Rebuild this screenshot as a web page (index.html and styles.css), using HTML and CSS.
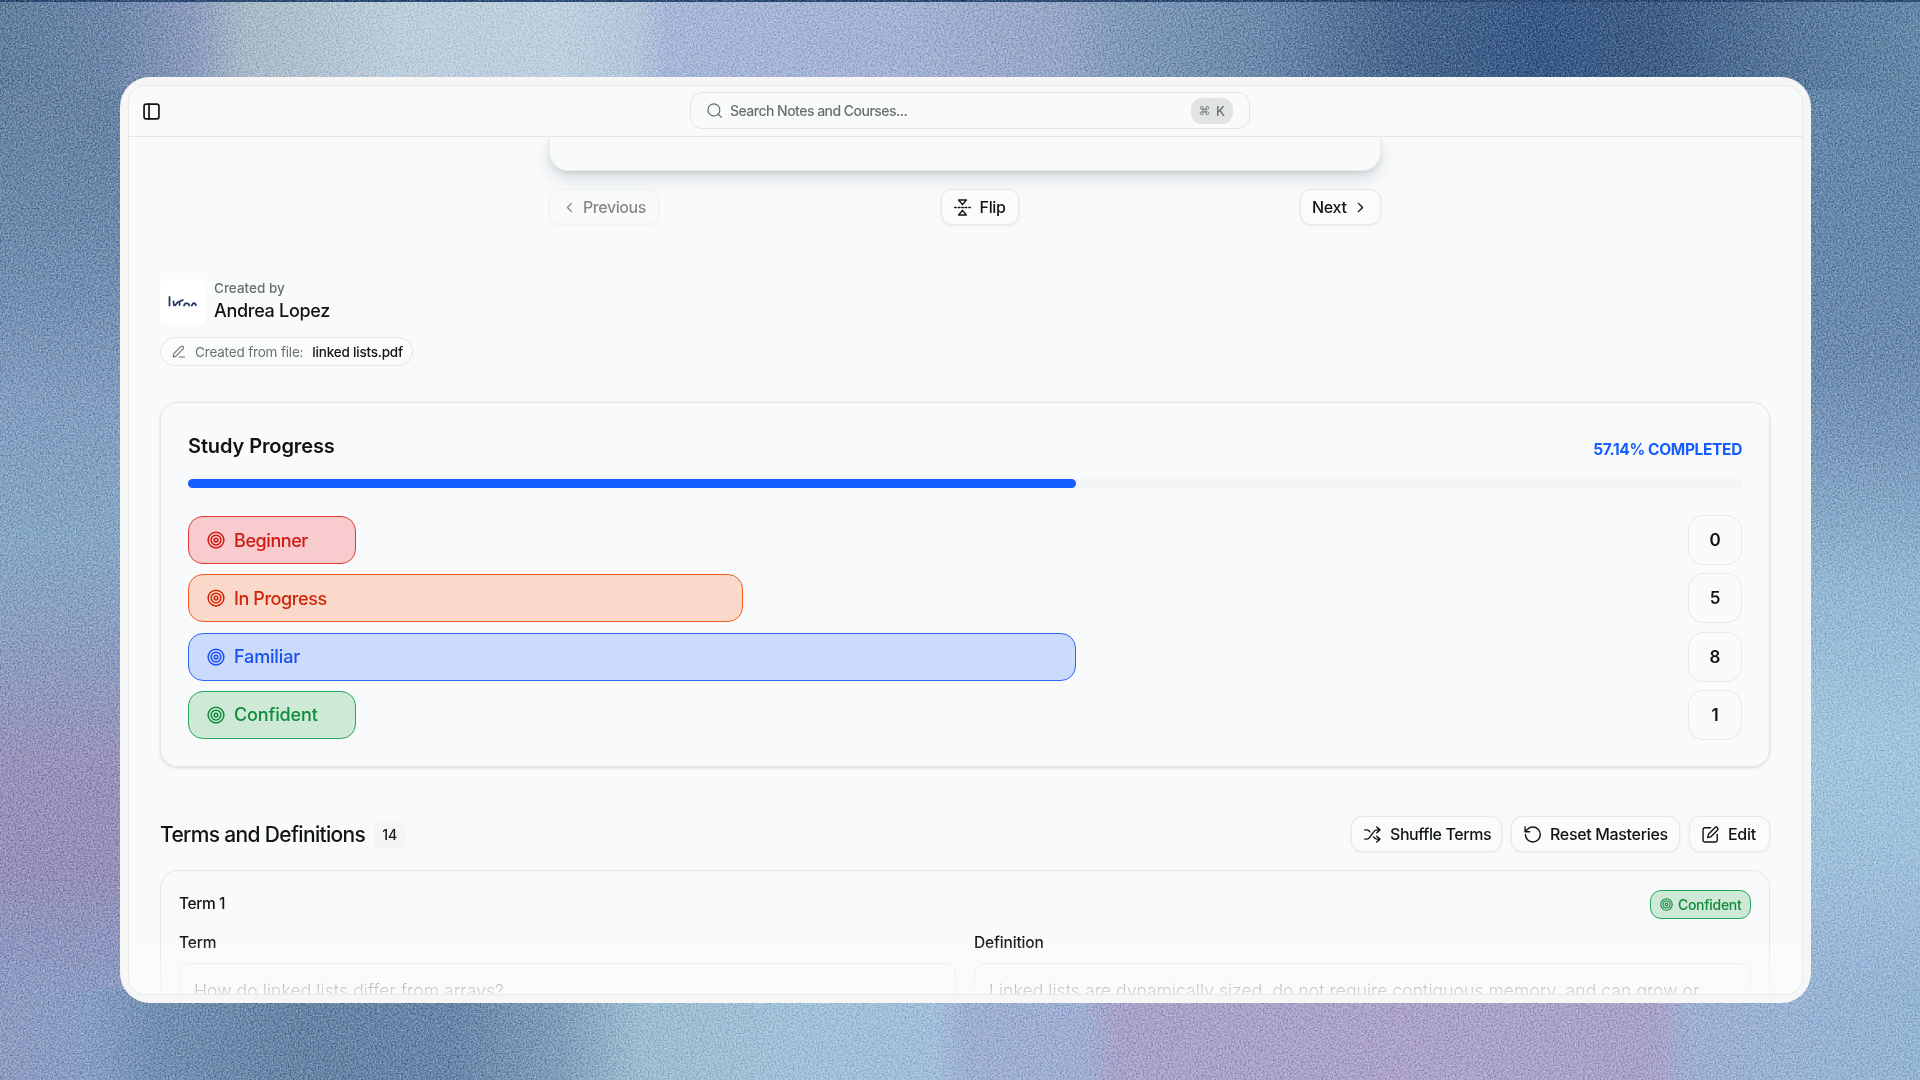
FILE: index.html
```html
<!DOCTYPE html>
<html lang="en">
<head>
	<meta charset="UTF-8">
	<title>Study Progress</title>
	<link rel="stylesheet" href="styles.css">
</head>
<body>
	<svg class="defs" width="0" height="0">
		<symbol id="target" viewBox="0 0 24 24"><circle cx="12" cy="12" r="10.5"/><circle cx="12" cy="12" r="6.5"/><circle cx="12" cy="12" r="2.5"/></symbol>
	</svg>
	<svg class="grain" width="1920" height="1080">
		<filter id="noise" x="0" y="0" width="100%" height="100%" color-interpolation-filters="sRGB">
			<feTurbulence type="fractalNoise" baseFrequency="0.6" numOctaves="2" seed="4"/>
			<feColorMatrix type="matrix" values="1.8 0 0 0 -0.4  1.8 0 0 0 -0.4  1.8 0 0 0 -0.4  0 0 0 0 1"/>
		</filter>
		<rect width="1920" height="1080" filter="url(#noise)"/>
	</svg>
	<div class="window">
		<div class="panel">
			<header>
				<svg class="icon side" viewBox="0 0 24 24"><rect x="1.5" y="1.5" width="21" height="21" rx="3"/><path d="M8.5 1.5v21"/></svg>
				<div class="search">
					<svg class="icon" viewBox="0 0 24 24"><circle cx="11" cy="11" r="9.5"/><path d="M18 18l5 5"/></svg>
					<span class="t-search">Search Notes and Courses...</span>
					<kbd><svg class="cmd" viewBox="0 0 24 24"><path d="M15 6v12a3 3 0 1 0 3-3H6a3 3 0 1 0 3 3V6a3 3 0 1 0-3 3h12a3 3 0 1 0-3-3"/></svg>K</kbd>
				</div>
			</header>
			<main>
				<div class="flash">
					<div class="flashcard"></div>
					<div class="flash-btns">
						<button class="btn prev"><svg class="icon chev" viewBox="0 0 10 16"><path d="M8 2L2 8l6 6"/></svg><span class="t-prev">Previous</span></button>
						<button class="btn flip"><svg class="icon" viewBox="0 0 24 24"><path d="M6.500 1.500h11l-5.500 6.500zM6.500 22.500h11l-5.500-6.500zM1 12h2M6 12h2.500M11 12h2M15.500 12h2.500M21 12h2"/></svg><span class="t-flip">Flip</span></button>
						<button class="btn next"><span class="t-next">Next</span><svg class="icon chev" viewBox="0 0 10 16"><path d="M2 2l6 6-6 6"/></svg></button>
					</div>
				</div>
				<div class="author">
					<div class="avatar">
						<svg viewBox="0 0 45 45"><path d="M9.500 18v8.500M13.500 22.500l.3 3.500 1.500.3 2.500-3.300M19.500 26v-3.500l3.300-1.500M24 26.500l1.200-2 1.800-.2M28.500 24.800l.8 1.700M31.800 26.500l1.200-2 1.800-.3 1.200 2.100"/></svg>
					</div>
					<div class="names">
						<span class="t-by">Created by</span>
						<span class="t-name">Andrea Lopez</span>
					</div>
				</div>
				<div class="file">
					<svg class="icon" viewBox="0 0 24 24"><path d="M13 22h10M2 22l1.500-6L16.500 2.500a3 3 0 0 1 4.200 4.200L7.500 20.500z"/></svg>
					<span class="t-from">Created from file:</span>
					<span class="t-file">linked lists.pdf</span>
				</div>
				<div class="progress">
					<div class="progress-head">
						<h2 class="t-study">Study Progress</h2>
						<span class="t-done">57.14% COMPLETED</span>
					</div>
					<div class="track"><div class="fill" style="width:57.14%"></div></div>
					<div class="row"><div class="bar beginner" style="width:168px"><svg class="icon"><use href="#target"/></svg><span class="t-beg">Beginner</span></div><div class="count">0</div></div>
					<div class="row"><div class="bar doing" style="width:35.71%"><svg class="icon"><use href="#target"/></svg><span class="t-doing">In Progress</span></div><div class="count">5</div></div>
					<div class="row"><div class="bar familiar" style="width:57.14%"><svg class="icon"><use href="#target"/></svg><span class="t-fam">Familiar</span></div><div class="count">8</div></div>
					<div class="row"><div class="bar confident" style="width:168px"><svg class="icon"><use href="#target"/></svg><span class="t-conf">Confident</span></div><div class="count">1</div></div>
				</div>
				<div class="terms-head">
					<h2 class="t-terms">Terms and Definitions</h2>
					<span class="total">14</span>
					<div class="tools">
						<button class="btn shuffle"><svg class="icon" viewBox="0 0 24 24"><path d="M1 18.500h3c2 0 3-1 4-2.500l6-8c1-1.500 2-2.500 4-2.500h4M18 1.500l4.500 4L18 9.500M1 5.500h3c2 0 3.200 1 4.300 2.800M13.500 15.500c1.200 2 2.500 3 4.500 3h4M18 14.500l4.500 4-4.500 4"/></svg><span class="t-shuf">Shuffle Terms</span></button>
						<button class="btn reset"><svg class="icon" viewBox="0 0 24 24"><path d="M2 12a10.500 10.500 0 1 0 10.500-10.500A11 11 0 0 0 5 4.500L1.500 8M1.500 1.500V8H8"/></svg><span class="t-reset">Reset Masteries</span></button>
						<button class="btn edit"><svg class="icon" viewBox="0 0 24 24"><path d="M12 2.500H4a2.500 2.500 0 0 0-2.500 2.500v15A2.500 2.500 0 0 0 4 22.500h15a2.500 2.500 0 0 0 2.500-2.500v-8M18.500 2a2.600 2.600 0 0 1 3.600 3.600L12.500 15.300 8 16.500l1.200-4.700z"/></svg><span class="t-edit">Edit</span></button>
					</div>
				</div>
				<div class="term">
					<div class="term-top">
						<span class="t-term1">Term 1</span>
						<span class="badge"><svg class="icon"><use href="#target"/></svg><span class="t-badge">Confident</span></span>
					</div>
					<div class="fields">
						<div class="field">
							<label class="t-term">Term</label>
							<div class="input"><span class="t-how">How do linked lists differ from arrays?</span></div>
						</div>
						<div class="field">
							<label class="t-def">Definition</label>
							<div class="input"><span class="t-linked">Linked lists are dynamically sized, do not require contiguous memory, and can grow or</span></div>
						</div>
					</div>
				</div>
			</main>
			<div class="fade"></div>
		</div>
	</div>
</body>
</html>
```
FILE: styles.css
```css
*{
	margin: 0;
	padding: 0;
	box-sizing: border-box;
}
html,body{
	width: 1920px;
	height: 1080px;
	overflow: hidden;
}
body{
	font-family: Inter, "Liberation Sans", sans-serif;
	font-weight: 500;
	color: #111413;
	padding: 77px 109px 77px 120px;
	/* top edge line, top band, bottom band, left side, right side */
	background:
		linear-gradient(#2f4c75, #2f4c75) 0 0 / 1920px 2px no-repeat,
		linear-gradient(90deg, #62809f 0, #6d88aa 110px, #8b9bbf 190px, #a9bac8 245px, #bdcedc 400px, #bfd0df 560px, #b5c7da 635px, #a9b8d9 665px, #a5b3d4 900px, #98a7c8 1060px, #819cbb 1120px, #6d8bac 1260px, #47678e 1400px, #385987 1540px, #3f5f88 1660px, #58799c 1790px, #668aa9 1920px) 0 0 / 1920px 90px no-repeat,
		linear-gradient(90deg, #909dc2 0, #889fc4 90px, #7592b4 150px, #6785a6 300px, #6b87aa 450px, #819fbb 560px, #9dbed1 640px, #a2c2d8 800px, #a2bfda 935px, #9fb0d2 965px, #a0b0d4 1080px, #aaa3c9 1120px, #ada4ca 1400px, #aaa3c8 1650px, #9fb0d2 1690px, #9ab4d4 1790px, #95b7d3 1920px) 0 100% / 1920px 90px no-repeat,
		linear-gradient(#647f9f 0, #6c89aa 200px, #7591b3 300px, #839ec0 400px, #87a8c6 540px, #8e9dc1 660px, #9994bc 760px, #9691ba 880px, #9097bf 930px, #8e9dc3 990px) 0 0 / 150px 990px no-repeat,
		linear-gradient(#6388a7 0, #6789ac 200px, #6c8daf 350px, #7c9cbd 450px, #94b8d4 580px, #a3c6dd 740px, #a0c2db 850px, #99b5d5 990px) 100% 0 / 150px 990px no-repeat,
		#8fa9c9;
}
.defs{
	position: absolute;
}
/* film grain over the backdrop */
.grain{
	position: absolute;
	top: 0;
	left: 0;
	mix-blend-mode: soft-light;
	opacity: 0.6;
}
.window{
	position: relative;
	height: 926px;
	padding: 8px;
	border-radius: 30px;
	background: #f6f6f6;
}
.panel{
	position: relative;
	height: 910px;
	border: 1.5px solid #e7e9e9;
	border-radius: 18px;
	background: #f8fafc;
	overflow: hidden;
	display: flex;
	flex-direction: column;
}
.icon{
	width: 18px;
	height: 18px;
	flex: none;
	fill: none;
	stroke: currentColor;
	stroke-width: 2;
	stroke-linecap: round;
	stroke-linejoin: round;
	overflow: visible;
}
span,h2,label{
	white-space: nowrap;
}
header{
	height: 51px;
	flex: none;
	border-bottom: 1px solid #e3e6e6;
	display: flex;
	align-items: center;
	padding-left: 14px;
}
.side{
	width: 17px;
	height: 17px;
	margin-top: 1px;
	stroke-width: 2.4;
}
.search{
	width: 560px;
	height: 37px;
	margin: 0 0 1px 530px;
	border: 1px solid #e3e6e5;
	border-radius: 12px;
	display: flex;
	align-items: center;
	padding: 0 16px;
	color: #69706d;
}
.search .icon{
	width: 15px;
	height: 15px;
	margin-right: 8px;
}
kbd{
	width: 42px;
	height: 26px;
	margin-left: auto;
	border-radius: 11px;
	background: #e1e4e2;
	display: flex;
	align-items: center;
	justify-content: center;
	gap: 6px;
	font: 500 13px Inter, sans-serif;
}
.cmd{
	width: 11px;
	height: 11px;
	fill: none;
	stroke: currentColor;
	stroke-width: 1.8;
}
main{
	flex: 1;
	padding: 0 32px 0 31px;
	overflow: hidden;
}
.flash{
	width: 832px;
	margin-left: 389px;
}
.flashcard{
	height: 34px;
	border: 1px solid #e6e9e9;
	border-top: 0;
	border-radius: 0 0 19px 19px;
	box-shadow: 0 8px 18px -1px rgba(30,40,35,0.13), 0 3px 7px -2px rgba(30,40,35,0.15);
}
.flash-btns{
	margin-top: 18px;
	display: flex;
	justify-content: space-between;
}
.btn{
	height: 36px;
	border: 1px solid #e5e8e7;
	border-radius: 11px;
	background: #fafbfc;
	box-shadow: 0 1px 3px rgba(0,0,0,0.06);
	font: 500 16px Inter, sans-serif;
	color: #111413;
	display: flex;
	align-items: center;
	padding-left: 12px;
}
.btn .icon{
	width: 17px;
	height: 17px;
	margin-right: 9px;
}
.btn .chev{
	width: 7px;
	height: 11px;
}
.prev{
	width: 110px;
	padding-left: 16px;
	opacity: 0.5;
}
.prev .chev{
	margin-right: 10px;
}
.flip{
	width: 78px;
}
.next{
	width: 81px;
	padding-left: 11px;
}
.next .chev{
	margin: 0 0 0 10px;
}
.author{
	margin-top: 54px;
	height: 46px;
	display: flex;
}
.avatar{
	width: 45px;
	height: 45px;
	border-radius: 6px;
	background: #fff;
}
.avatar svg{
	width: 45px;
	height: 45px;
	fill: none;
	stroke: #203a66;
	stroke-width: 1.8;
	stroke-linecap: round;
	stroke-linejoin: round;
}
.names{
	margin-left: 9px;
	display: flex;
	flex-direction: column;
}
.file{
	width: 253px;
	height: 29px;
	margin-top: 12px;
	border: 1px solid #e3e6e5;
	border-radius: 15px;
	background: #fafcfb;
	display: flex;
	align-items: center;
	padding-left: 11px;
}
.file .icon{
	width: 13px;
	height: 13px;
	margin-right: 10px;
	color: #6b716e;
}
.progress{
	height: 365px;
	margin-top: 36px;
	border: 1px solid #e4e7e7;
	border-radius: 18px;
	box-shadow: 0 1px 3px rgba(0,0,0,0.14);
	padding: 29px 27px 0;
}
.progress-head{
	height: 47px;
	display: flex;
	justify-content: space-between;
}
.track{
	height: 9px;
	border-radius: 5px;
	background: #f3f4f6;
	margin-bottom: 27px;
}
.fill{
	height: 9px;
	border-radius: 5px;
	background: #155dfc;
}
.row{
	height: 50px;
	margin-bottom: 8.250px;
	display: flex;
	align-items: center;
	justify-content: space-between;
}
.bar{
	height: 48px;
	border: 1px solid;
	border-radius: 15px;
	display: flex;
	align-items: center;
	padding-left: 18px;
}
.bar .icon{
	margin-right: 9px;
}
.beginner{
	background: #f8cbce;
	border-color: #e53935;
	color: #d01a10;
}
.doing{
	background: #fad9ca;
	border-color: #f55a20;
	color: #d22409;
}
.familiar{
	background: #ccdafc;
	border-color: #2b68f5;
	color: #1750ee;
}
.confident{
	background: #cfe9d7;
	border-color: #25a857;
	color: #108a3d;
}
.count{
	width: 54px;
	height: 50px;
	border: 1px solid #e7e9e9;
	border-radius: 15px;
	text-align: center;
	font-size: 17px;
	font-weight: 600;
	line-height: 48px;
}
.terms-head{
	margin-top: 49px;
	height: 36px;
	display: flex;
	align-items: center;
}
.total{
	width: 31px;
	height: 27px;
	margin-left: 9px;
	border-radius: 6px;
	background: #f3f5f6;
	text-align: center;
	font-size: 14px;
	line-height: 27px;
}
.tools{
	margin-left: auto;
	display: flex;
	gap: 9px;
}
.shuffle{
	width: 151px;
}
.reset{
	width: 169px;
}
.edit{
	width: 81px;
}
.term{
	height: 300px;
	margin-top: 18px;
	border: 1px solid #e4e7e7;
	border-radius: 18px;
	padding: 18px 18px;
}
.term-top{
	height: 30px;
	display: flex;
	align-items: center;
	justify-content: space-between;
}
.badge{
	width: 101px;
	height: 29px;
	border: 1px solid #25a857;
	border-radius: 11px;
	background: #cfe9d7;
	color: #108a3d;
	display: flex;
	align-items: center;
	padding-left: 9px;
}
.badge .icon{
	width: 13px;
	height: 13px;
	margin-right: 5px;
}
.fields{
	margin-top: 14px;
	display: grid;
	grid-template-columns: 1fr 1fr;
	gap: 18px;
}
.input{
	height: 150px;
	margin-top: 10px;
	border: 1px solid #e4e7e7;
	border-radius: 11px;
	padding: 13px 14px;
	color: #202422;
	font-weight: 300;
}
.fade{
	position: absolute;
	left: 0;
	right: 0;
	bottom: 0;
	height: 55px;
	background: linear-gradient(rgba(248,250,251,0), rgba(250,251,251,0.85));
}
/* type */
.t-search{
	font-size: 14px;
	letter-spacing: -0.52px;
}
.t-flip,.t-next,.t-edit{
	font-size: 16px;
	letter-spacing: -0.3px;
}
.t-prev,.t-shuf{
	font-size: 16px;
	letter-spacing: -0.42px;
}
.t-reset{
	font-size: 16px;
	letter-spacing: -0.33px;
}
.t-by{
	font-size: 13.5px;
	line-height: 18px;
	color: #69706d;
}
.t-name{
	font-size: 18px;
	line-height: 27px;
	letter-spacing: -0.3px;
}
.t-from{
	font-size: 13.5px;
	color: #6b716e;
	font-weight: 400;
	letter-spacing: -0.17px;
	margin-right: 9px;
}
.t-file{
	font-size: 13.5px;
	letter-spacing: -0.2px;
}
.t-study{
	font-size: 20px;
	font-weight: 600;
	line-height: 28px;
	letter-spacing: -0.1px;
}
.t-done{
	font-size: 15.5px;
	font-weight: 700;
	line-height: 36px;
	letter-spacing: -0.35px;
	color: #155dfc;
}
.t-beg,.t-doing{
	font-size: 18px;
	letter-spacing: -0.42px;
}
.t-fam,.t-conf{
	font-size: 18px;
	letter-spacing: -0.15px;
}
.t-terms{
	font-size: 21px;
	font-weight: 500;
	letter-spacing: -0.67px;
}
.t-term1,.t-term,.t-def{
	font-size: 15.5px;
	line-height: 20px;
	letter-spacing: -0.15px;
	display: block;
}
.t-term1{
	letter-spacing: -0.4px;
}
.t-badge{
	font-size: 14px;
	letter-spacing: -0.3px;
}
.t-how{
	font-size: 17.5px;
	line-height: 28px;
	letter-spacing: 0.1px;
}
.t-linked{
	font-size: 17.5px;
	line-height: 28px;
	letter-spacing: 0.08px;
}
```
